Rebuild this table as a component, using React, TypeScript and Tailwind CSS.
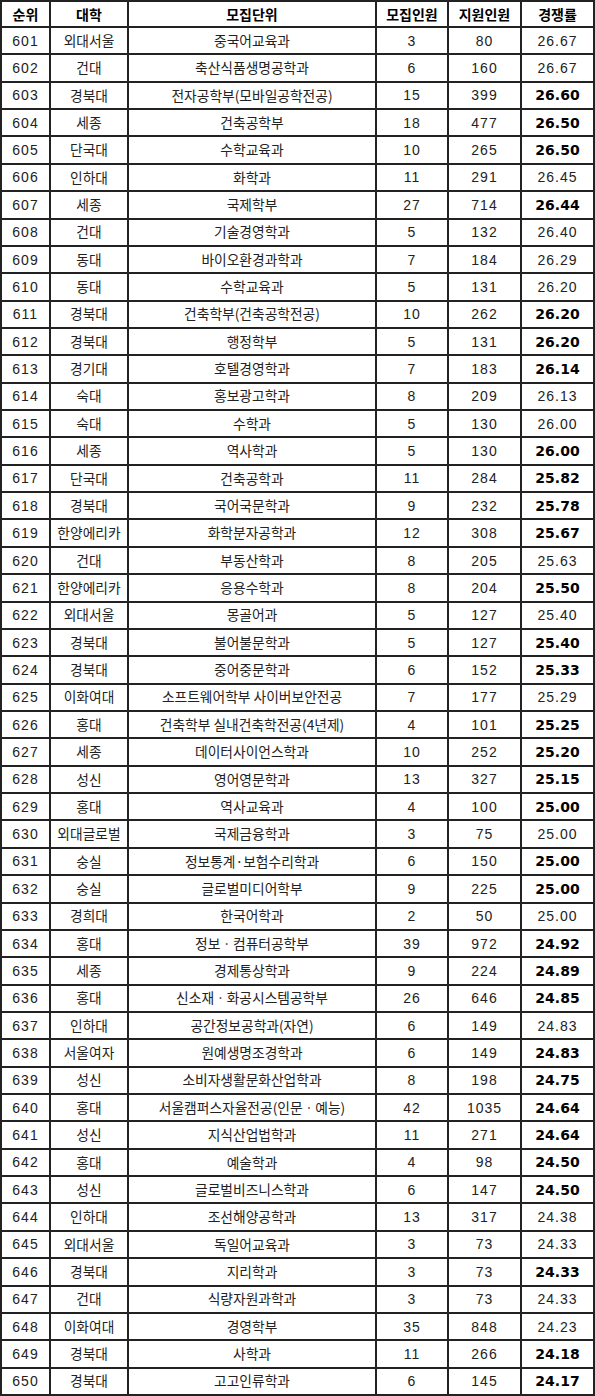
import React from 'react';

type Row = [number, string, string, number, number, string, boolean];

// 순위, 대학, 모집단위, 모집인원, 지원인원, 경쟁률, 굵게
const rows: Row[] = [
  [601, '외대서울', '중국어교육과', 3, 80, '26.67', false],
  [602, '건대', '축산식품생명공학과', 6, 160, '26.67', false],
  [603, '경북대', '전자공학부(모바일공학전공)', 15, 399, '26.60', true],
  [604, '세종', '건축공학부', 18, 477, '26.50', true],
  [605, '단국대', '수학교육과', 10, 265, '26.50', true],
  [606, '인하대', '화학과', 11, 291, '26.45', false],
  [607, '세종', '국제학부', 27, 714, '26.44', true],
  [608, '건대', '기술경영학과', 5, 132, '26.40', false],
  [609, '동대', '바이오환경과학과', 7, 184, '26.29', false],
  [610, '동대', '수학교육과', 5, 131, '26.20', false],
  [611, '경북대', '건축학부(건축공학전공)', 10, 262, '26.20', true],
  [612, '경북대', '행정학부', 5, 131, '26.20', true],
  [613, '경기대', '호텔경영학과', 7, 183, '26.14', true],
  [614, '숙대', '홍보광고학과', 8, 209, '26.13', false],
  [615, '숙대', '수학과', 5, 130, '26.00', false],
  [616, '세종', '역사학과', 5, 130, '26.00', true],
  [617, '단국대', '건축공학과', 11, 284, '25.82', true],
  [618, '경북대', '국어국문학과', 9, 232, '25.78', true],
  [619, '한양에리카', '화학분자공학과', 12, 308, '25.67', true],
  [620, '건대', '부동산학과', 8, 205, '25.63', false],
  [621, '한양에리카', '응용수학과', 8, 204, '25.50', true],
  [622, '외대서울', '몽골어과', 5, 127, '25.40', false],
  [623, '경북대', '불어불문학과', 5, 127, '25.40', true],
  [624, '경북대', '중어중문학과', 6, 152, '25.33', true],
  [625, '이화여대', '소프트웨어학부 사이버보안전공', 7, 177, '25.29', false],
  [626, '홍대', '건축학부 실내건축학전공(4년제)', 4, 101, '25.25', true],
  [627, '세종', '데이터사이언스학과', 10, 252, '25.20', true],
  [628, '성신', '영어영문학과', 13, 327, '25.15', true],
  [629, '홍대', '역사교육과', 4, 100, '25.00', true],
  [630, '외대글로벌', '국제금융학과', 3, 75, '25.00', false],
  [631, '숭실', '정보통계·보험수리학과', 6, 150, '25.00', true],
  [632, '숭실', '글로벌미디어학부', 9, 225, '25.00', true],
  [633, '경희대', '한국어학과', 2, 50, '25.00', false],
  [634, '홍대', '정보ㆍ컴퓨터공학부', 39, 972, '24.92', true],
  [635, '세종', '경제통상학과', 9, 224, '24.89', true],
  [636, '홍대', '신소재ㆍ화공시스템공학부', 26, 646, '24.85', true],
  [637, '인하대', '공간정보공학과(자연)', 6, 149, '24.83', false],
  [638, '서울여자', '원예생명조경학과', 6, 149, '24.83', true],
  [639, '성신', '소비자생활문화산업학과', 8, 198, '24.75', true],
  [640, '홍대', '서울캠퍼스자율전공(인문ㆍ예능)', 42, 1035, '24.64', true],
  [641, '성신', '지식산업법학과', 11, 271, '24.64', true],
  [642, '홍대', '예술학과', 4, 98, '24.50', true],
  [643, '성신', '글로벌비즈니스학과', 6, 147, '24.50', true],
  [644, '인하대', '조선해양공학과', 13, 317, '24.38', false],
  [645, '외대서울', '독일어교육과', 3, 73, '24.33', false],
  [646, '경북대', '지리학과', 3, 73, '24.33', true],
  [647, '건대', '식량자원과학과', 3, 73, '24.33', false],
  [648, '이화여대', '경영학부', 35, 848, '24.23', false],
  [649, '경북대', '사학과', 11, 266, '24.18', true],
  [650, '경북대', '고고인류학과', 6, 145, '24.17', true],
];

const cell = 'border border-[#222] p-0 text-center align-middle whitespace-nowrap';
const num = "font-['Liberation_Sans','Noto_Sans_CJK_KR',sans-serif] text-[14px] tracking-[1px] text-[#222]";
const kor = "font-['Noto_Sans_CJK_KR',sans-serif] text-[13.75px] text-[#222]";

const App = () => {
  return (
    <div className="w-[595px] bg-white">
      <table className="w-[595px] table-fixed border-separate border-spacing-0 border border-[#222] leading-none">
        <colgroup>
          <col className="w-[49px]" />
          <col className="w-[78px]" />
          <col className="w-[248px]" />
          <col className="w-[72px]" />
          <col className="w-[73px]" />
          <col className="w-[73px]" />
        </colgroup>
        <thead>
          <tr className="h-[26px]">
            {['순위', '대학', '모집단위', '모집인원', '지원인원', '경쟁률'].map((h) => (
              <th key={h} className={`${cell} font-['Noto_Sans_CJK_KR',sans-serif] text-[14px] font-bold text-black`}>
                {h}
              </th>
            ))}
          </tr>
        </thead>
        <tbody>
          {rows.map(([rank, univ, dept, quota, applied, ratio, bold]) => (
            <tr key={rank} className="h-[27.36px]">
              <td className={`${cell} ${num}`}>{rank}</td>
              <td className={`${cell} ${kor}`}>{univ}</td>
              <td className={`${cell} ${kor}`}>{dept}</td>
              <td className={`${cell} ${num}`}>{quota}</td>
              <td className={`${cell} ${num}`}>{applied}</td>
              <td
                className={
                  bold
                    ? `${cell} font-['DejaVu_Sans',sans-serif] text-[14px] font-bold text-black`
                    : `${cell} ${num}`
                }
              >
                {ratio}
              </td>
            </tr>
          ))}
        </tbody>
      </table>
    </div>
  );
};

export default App;
